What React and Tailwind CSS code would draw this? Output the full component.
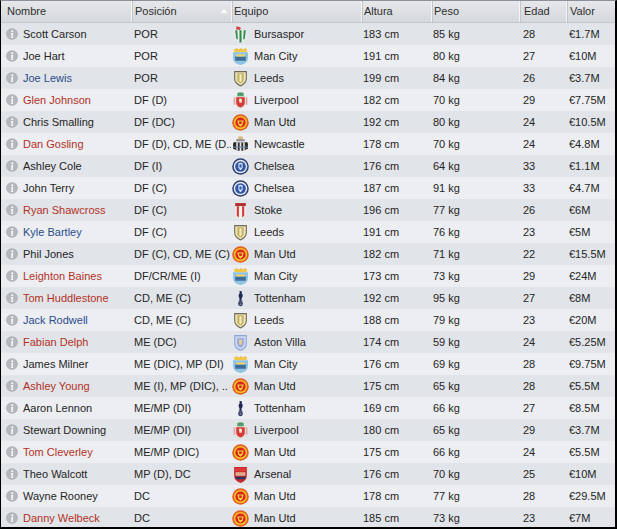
import React from "react";

const players = [
  { name: "Scott Carson", c: "n", pos: "POR", club: "bursa", team: "Bursaspor", h: 183, w: 85, age: 28, val: "€1.7M" },
  { name: "Joe Hart", c: "n", pos: "POR", club: "city", team: "Man City", h: 191, w: 80, age: 27, val: "€10M" },
  { name: "Joe Lewis", c: "b", pos: "POR", club: "leeds", team: "Leeds", h: 199, w: 84, age: 26, val: "€3.7M" },
  { name: "Glen Johnson", c: "r", pos: "DF (D)", club: "lfc", team: "Liverpool", h: 182, w: 70, age: 29, val: "€7.75M" },
  { name: "Chris Smalling", c: "n", pos: "DF (DC)", club: "mufc", team: "Man Utd", h: 192, w: 80, age: 24, val: "€10.5M" },
  { name: "Dan Gosling", c: "r", pos: "DF (D), CD, ME (D..", club: "ncl", team: "Newcastle", h: 178, w: 70, age: 24, val: "€4.8M" },
  { name: "Ashley Cole", c: "n", pos: "DF (I)", club: "cfc", team: "Chelsea", h: 176, w: 64, age: 33, val: "€1.1M" },
  { name: "John Terry", c: "n", pos: "DF (C)", club: "cfc", team: "Chelsea", h: 187, w: 91, age: 33, val: "€4.7M" },
  { name: "Ryan Shawcross", c: "r", pos: "DF (C)", club: "stoke", team: "Stoke", h: 196, w: 77, age: 26, val: "€6M" },
  { name: "Kyle Bartley", c: "b", pos: "DF (C)", club: "leeds", team: "Leeds", h: 191, w: 76, age: 23, val: "€5M" },
  { name: "Phil Jones", c: "n", pos: "DF (C), CD, ME (C)", club: "mufc", team: "Man Utd", h: 182, w: 71, age: 22, val: "€15.5M" },
  { name: "Leighton Baines", c: "r", pos: "DF/CR/ME (I)", club: "city", team: "Man City", h: 173, w: 73, age: 29, val: "€24M" },
  { name: "Tom Huddlestone", c: "r", pos: "CD, ME (C)", club: "thfc", team: "Tottenham", h: 192, w: 95, age: 27, val: "€8M" },
  { name: "Jack Rodwell", c: "b", pos: "CD, ME (C)", club: "leeds", team: "Leeds", h: 188, w: 79, age: 23, val: "€20M" },
  { name: "Fabian Delph", c: "r", pos: "ME (DC)", club: "avfc", team: "Aston Villa", h: 174, w: 59, age: 24, val: "€5.25M" },
  { name: "James Milner", c: "n", pos: "ME (DIC), MP (DI)", club: "city", team: "Man City", h: 176, w: 69, age: 28, val: "€9.75M" },
  { name: "Ashley Young", c: "r", pos: "ME (I), MP (DIC), ..", club: "mufc", team: "Man Utd", h: 175, w: 65, age: 28, val: "€5.5M" },
  { name: "Aaron Lennon", c: "n", pos: "ME/MP (DI)", club: "thfc", team: "Tottenham", h: 169, w: 66, age: 27, val: "€8.5M" },
  { name: "Stewart Downing", c: "n", pos: "ME/MP (DI)", club: "lfc", team: "Liverpool", h: 180, w: 65, age: 29, val: "€3.7M" },
  { name: "Tom Cleverley", c: "r", pos: "ME/MP (DIC)", club: "mufc", team: "Man Utd", h: 175, w: 66, age: 24, val: "€5.5M" },
  { name: "Theo Walcott", c: "n", pos: "MP (D), DC", club: "afc", team: "Arsenal", h: 176, w: 70, age: 25, val: "€10M" },
  { name: "Wayne Rooney", c: "n", pos: "DC", club: "mufc", team: "Man Utd", h: 178, w: 77, age: 28, val: "€29.5M" },
  { name: "Danny Welbeck", c: "r", pos: "DC", club: "mufc", team: "Man Utd", h: 185, w: 73, age: 23, val: "€7M" },
];

const nameColor = { n: "text-[#252525]", r: "text-[#b3321f]", b: "text-[#2b4c8c]" };

const cols = "grid grid-cols-[130px_100px_130px_70px_88px_47px_1fr]";

const InfoIcon = () => (
  <svg width="12" height="12" viewBox="0 0 12 12" className="shrink-0">
    <circle cx="6" cy="6" r="5.8" fill="#a7abb1" />
    <circle cx="6" cy="6" r="5" fill="#b4b8bd" />
    <circle cx="6.3" cy="3.3" r="1" fill="#fff" />
    <path d="M5.2 5 L7.1 5 L6.6 9.3 L7.2 9.3 L7.1 10 L4.9 10 L5.1 9.3 L5.6 9.3 Z" fill="#fff" />
  </svg>
);

const Crest = ({ club }) => {
  switch (club) {
    case "mufc":
      return (
        <svg width="17" height="17" viewBox="0 0 16 16">
          <circle cx="8" cy="8" r="7.8" fill="#e2601f" />
          <circle cx="8" cy="8" r="6.2" fill="#f6c22a" />
          <circle cx="8" cy="8" r="4.8" fill="#d9251d" />
          <path d="M5 6 L11 6 L10 10 L8 12 L6 10 Z" fill="#f4d23a" />
          <path d="M6.5 7 L9.5 7 L9 9.5 L7 9.5 Z" fill="#d9251d" />
        </svg>
      );
    case "city":
      return (
        <svg width="17" height="17" viewBox="0 0 16 16">
          <path d="M2 1 L14 1 L14 4 L2 4 Z" fill="#f1c84b" />
          <path d="M3 1 L5 0 L5 2 Z M7 1 L9 0 L9 2 Z M11 1 L13 0 L13 2 Z" fill="#e8b33a" />
          <path d="M1 4 L15 4 L15 10 Q15 14 8 16 Q1 14 1 10 Z" fill="#8fc3e5" />
          <path d="M3 8 L13 8 L13 12 L3 12 Z" fill="#3f6f98" />
          <path d="M4 6 L12 6 L12 8 L4 8 Z" fill="#f1d36a" />
        </svg>
      );
    case "leeds":
      return (
        <svg width="17" height="17" viewBox="0 0 16 16">
          <path d="M2 1 L14 1 L14 8 Q14 13 8 15.5 Q2 13 2 8 Z" fill="#6d6a58" />
          <path d="M3 2 L13 2 L13 8 Q13 12 8 14.3 Q3 12 3 8 Z" fill="#e9e2bd" />
          <path d="M5 3 L11 3 L11 9 Q11 11.5 8 12.8 Q5 11.5 5 9 Z" fill="#c9b25a" />
          <path d="M7 4 L9 4 L9 11 L7 11 Z" fill="#f2ecd0" />
        </svg>
      );
    case "lfc":
      return (
        <svg width="17" height="17" viewBox="0 0 16 16">
          <path d="M3 4 L13 4 L13 10 Q13 14 8 16 Q3 14 3 10 Z" fill="#e8e0d6" />
          <path d="M4 5 L12 5 L12 10 Q12 13 8 14.6 Q4 13 4 10 Z" fill="#d63b3b" />
          <path d="M5 1 Q8 -0.5 11 1 L11 4 L5 4 Z" fill="#4f9d6c" />
          <path d="M6.5 6.5 Q8 5.5 9.5 7 L9 10 L7 10 Z" fill="#f3e7d0" />
          <path d="M1.5 5 L3 5 L3 12 L1.5 12 Z M13 5 L14.5 5 L14.5 12 L13 12 Z" fill="#e9a3a3" />
        </svg>
      );
    case "cfc":
      return (
        <svg width="17" height="17" viewBox="0 0 16 16">
          <circle cx="8" cy="8" r="7.8" fill="#2c3f70" />
          <circle cx="8" cy="8" r="6.4" fill="#e7e9ef" />
          <circle cx="8" cy="8" r="5" fill="#2e57a8" />
          <path d="M6 5 Q8 4 10 5 L10 9 Q9 11 8 11.5 Q7 11 6 9 Z" fill="#dfe6f5" />
          <path d="M7 6 L9 6 L9 9 L7 9 Z" fill="#2e57a8" />
        </svg>
      );
    case "ncl":
      return (
        <svg width="17" height="17" viewBox="0 0 16 16">
          <path d="M6 0.5 L10 0.5 L10 3 L6 3 Z" fill="#d9b46a" />
          <path d="M4 3 L12 3 L12 5 L4 5 Z" fill="#8f8f8f" />
          <path d="M1 7 Q2 5 4 6 L12 6 Q14 5 15 7 L15 12 Q8 16 1 12 Z" fill="#2b2b2b" />
          <path d="M4 6 L5.5 6 L5.5 13.5 L4 13 Z M7.2 6 L8.8 6 L8.8 14 L7.2 14 Z M10.5 6 L12 6 L12 13 L10.5 13.5 Z" fill="#e8e8e8" />
          <path d="M1 10 L15 10 L15 11 L1 11 Z" fill="#6b86a8" />
        </svg>
      );
    case "stoke":
      return (
        <svg width="17" height="17" viewBox="0 0 16 16">
          <path d="M3 1 L13 1 L13 4 L3 4 Z" fill="#b03030" />
          <path d="M3 4 L13 4 L13 10 Q13 14 8 16 Q3 14 3 10 Z" fill="#f3f0ee" />
          <path d="M4.5 4 L6.5 4 L6.5 14.6 Q5.2 13.8 4.5 12.8 Z M9.5 4 L11.5 4 L11.5 12.8 Q10.8 13.8 9.5 14.6 Z" fill="#d33a3a" />
        </svg>
      );
    case "thfc":
      return (
        <svg width="17" height="17" viewBox="0 0 16 16">
          <path d="M7 1 Q9 0.5 9.5 2 L9 3 Q10.5 4 10 6 L9 8 L9 10 L7 10 L7 8 Q5.5 6 6.5 4 L7.3 3 Z" fill="#1f2a55" />
          <path d="M6 10 L10 10 L9.5 11 L6.5 11 Z" fill="#1f2a55" />
          <circle cx="8" cy="13" r="2.2" fill="#1f2a55" />
          <path d="M7 12.2 L9 12.2 M7 13.6 L9 13.6" stroke="#d0d4de" strokeWidth="0.6" />
        </svg>
      );
    case "avfc":
      return (
        <svg width="17" height="17" viewBox="0 0 16 16">
          <path d="M2 1 L14 1 L14 9 Q14 14 8 16 Q2 14 2 9 Z" fill="#8fa7d6" />
          <path d="M3 2 L13 2 L13 9 Q13 13 8 14.8 Q3 13 3 9 Z" fill="#c9d4ee" />
          <path d="M5 4 L11 4 L11 9 Q11 11.5 8 12.6 Q5 11.5 5 9 Z" fill="#9ba4d8" />
          <path d="M6.5 5.5 L9.5 5.5 L9 10 L7 10 Z" fill="#e8d48a" />
        </svg>
      );
    case "afc":
      return (
        <svg width="17" height="17" viewBox="0 0 16 16">
          <path d="M2 1 L14 1 L14 9 Q14 14 8 16 Q2 14 2 9 Z" fill="#c62c2c" />
          <path d="M3 2 L13 2 L13 5 L3 5 Z" fill="#e03a3a" />
          <path d="M3.5 6 L12.5 6 L12.5 9 L3.5 9 Z" fill="#ebd9c4" />
          <path d="M4 7 L12 7 L12 8 L4 8 Z" fill="#c08b3e" />
          <path d="M3 10 L13 10 L12 12.5 L4 12.5 Z" fill="#2a3566" />
        </svg>
      );
    case "bursa":
      return (
        <svg width="17" height="17" viewBox="0 0 16 16">
          <path d="M4 0.5 Q7 0 8.5 2 L7 4 L4 3 Z" fill="#d44646" />
          <path d="M2 4 L14 4 L13 11 Q11 15 8 16 Q5 15 3 11 Z" fill="#f0f0f0" />
          <path d="M3 4 L5 4 L5.5 13 L4 12 Z M7 4 L9 4 L9 15.5 L7 15.5 Z M11 4 L13 4 L12 12 L10.5 13 Z" fill="#2f8a4a" />
        </svg>
      );
    default:
      return null;
  }
};

const headers = [
  { label: "Nombre", pad: "pl-[6px]" },
  { label: "Posición", pad: "pl-[3px]", sort: true },
  { label: "Equipo", pad: "pl-[2px]" },
  { label: "Altura", pad: "pl-[2px]" },
  { label: "Peso", pad: "pl-[2px]" },
  { label: "Edad", pad: "pl-[4px]" },
  { label: "Valor", pad: "pl-[3px]" },
];

export default function App() {
  return (
    <div
      className="w-[617px] h-[529px] overflow-hidden bg-[#e5e8ec] border-l border-r-2 border-b-2 border-t border-l-black border-r-black border-b-black border-t-[#8d9096] text-[11px] leading-none"
      style={{ fontFamily: "'Liberation Sans', Arial, sans-serif" }}
    >
      <div className={`${cols} h-[22px] bg-gradient-to-b from-[#e6e8eb] to-[#d5d8dc] border-b border-[#c3c6cb] text-[#2e2e2e]`}>
        {headers.map((hd, i) => (
          <div
            key={hd.label}
            className={`relative flex items-center ${hd.pad} ${i > 0 ? "border-l border-l-[#f4f5f7] shadow-[inset_1px_0_0_#c2c5ca]" : ""}`}
          >
            {hd.label}
            {hd.sort && (
              <span className="absolute right-[4px] top-[8px] w-0 h-0 border-l-[3px] border-r-[3px] border-b-[4px] border-l-transparent border-r-transparent border-b-white" />
            )}
          </div>
        ))}
      </div>
      {players.map((p, i) => (
        <div
          key={p.name}
          className={`${cols} h-[22px] items-center text-[#252525] ${i % 2 === 0 ? "bg-[#e1e4e9]" : "bg-[#eceef2]"}`}
        >
          <div className="flex items-center gap-[5px] pl-[5px]">
            <InfoIcon />
            <span className={nameColor[p.c]}>{p.name}</span>
          </div>
          <div className="pl-[3px] whitespace-nowrap overflow-hidden">{p.pos}</div>
          <div className="flex items-center gap-[5px] pl-[1px]">
            <Crest club={p.club} />
            <span>{p.team}</span>
          </div>
          <div className="pl-[2px]">{p.h} cm</div>
          <div className="pl-[2px]">{p.w} kg</div>
          <div className="pl-[4px]">{p.age}</div>
          <div className="pl-[3px]">{p.val}</div>
        </div>
      ))}
    </div>
  );
}
